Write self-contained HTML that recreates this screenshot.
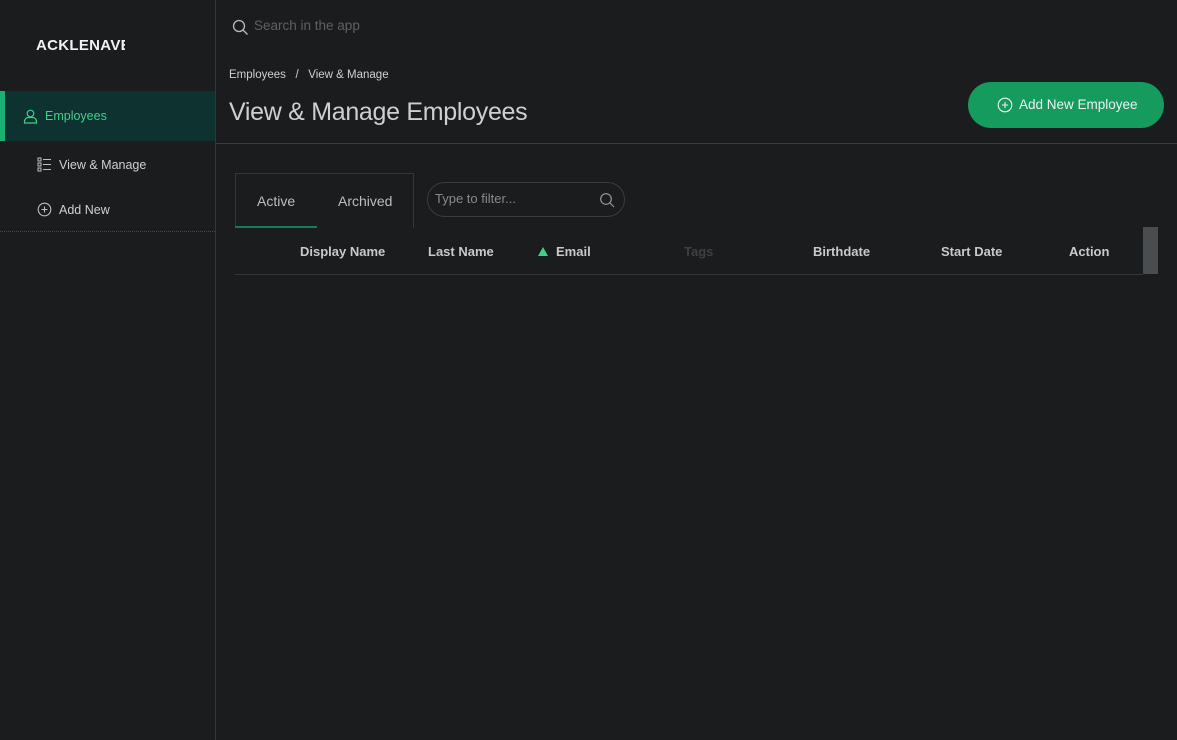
<!DOCTYPE html>
<html><head><meta charset="utf-8"><style>
*{margin:0;padding:0;box-sizing:border-box}
body{width:1177px;height:740px;background:#1b1c1e;font-family:"Liberation Sans",sans-serif;color:#c8c8c8;position:relative;overflow:hidden}
.abs{position:absolute}
.side{left:0;top:0;width:216px;height:740px;border-right:1px solid #34363a}
.logo{left:36px;top:37px;font-size:15px;font-weight:bold;color:#f2f2f2;letter-spacing:0.3px;width:89px;overflow:hidden;white-space:nowrap}
.act{left:0;top:91px;width:215px;height:50px;background:#0e3230;border-left:5px solid #1cb070}
.act span{position:absolute;left:40px;top:18px;font-size:12.5px;color:#3fd08a}
.nav{font-size:12.5px;color:#d0d0d0}
.dots{left:0;top:231px;width:215px;border-top:1px dotted #44464a}
.hdr{left:216px;top:143px;width:961px;border-top:1px solid #3a3c40}
.th{top:244px;font-size:13px;font-weight:bold;color:#c9c9c9}
</style></head><body>
<div class="abs side"></div>
<div class="abs logo">ACKLENAVE</div>
<div class="abs act"><svg style="position:absolute;left:18px;top:18px" width="15" height="15" viewBox="0 0 15 15" fill="none" stroke="#3fd08a" stroke-width="1.2"><circle cx="7.5" cy="4.5" r="3.3"/><path d="M1.5 14v-1.5c0-2 1.5-4 4-4h4c2.5 0 4 2 4 4V14z"/></svg><span>Employees</span></div>
<svg class="abs" style="left:37px;top:157px" width="15" height="15" viewBox="0 0 15 15" fill="none" stroke="#c0c0c0" stroke-width="1"><rect x="1" y="1" width="3" height="3"/><rect x="1" y="6" width="3" height="3"/><rect x="1" y="11" width="3" height="3"/><path d="M6 2.5h8M6 7.5h8M6 12.5h8"/></svg>
<div class="abs nav" style="left:59px;top:158px">View &amp; Manage</div>
<svg class="abs" style="left:37px;top:202px" width="15" height="15" viewBox="0 0 15 15" fill="none" stroke="#c0c0c0" stroke-width="1.1"><circle cx="7.5" cy="7.5" r="6.3"/><path d="M7.5 4.5v6M4.5 7.5h6"/></svg>
<div class="abs nav" style="left:59px;top:203px">Add New</div>
<div class="abs dots"></div>

<svg class="abs" style="left:232px;top:19px" width="17" height="17" viewBox="0 0 17 17" fill="none" stroke="#bbb" stroke-width="1.3"><circle cx="7" cy="7" r="5.5"/><path d="M11 11l4.5 4.5"/></svg>
<div class="abs" style="left:254px;top:18px;font-size:13.5px;color:#5e6064">Search in the app</div>
<div class="abs" style="left:229px;top:69px;font-size:11.5px;color:#d0d0d0">Employees &nbsp;&nbsp;/&nbsp;&nbsp; View &amp; Manage</div>
<div class="abs" style="left:229px;top:98px;font-size:25px;color:#cfcfcf;letter-spacing:-0.3px">View &amp; Manage Employees</div>
<div class="abs" style="left:968px;top:82px;width:196px;height:46px;border-radius:23px;background:#169b5e;color:#f0f0f0;font-size:13.5px;line-height:46px;padding-left:51px">Add New Employee</div>
<svg class="abs" style="left:997px;top:97px" width="16" height="16" viewBox="0 0 16 16" fill="none" stroke="#f0f0f0" stroke-width="1.1"><circle cx="8" cy="8" r="6.8"/><path d="M8 5v6M5 8h6"/></svg>
<div class="abs hdr"></div>

<div class="abs" style="left:235px;top:173px;width:179px;height:55px;border:1px solid #34363a;border-bottom:none"></div>
<div class="abs" style="left:235px;top:226px;width:82px;height:2px;background:#1a7a55"></div>
<div class="abs" style="left:257px;top:193px;font-size:14px;color:#bdbdbd">Active</div>
<div class="abs" style="left:338px;top:193px;font-size:14px;color:#bdbdbd">Archived</div>
<div class="abs" style="left:427px;top:182px;width:198px;height:35px;border:1px solid #3a3c40;border-radius:18px"></div>
<div class="abs" style="left:435px;top:191px;font-size:13px;color:#8a8a8a">Type to filter...</div>
<svg class="abs" style="left:599px;top:192px" width="16" height="16" viewBox="0 0 16 16" fill="none" stroke="#999" stroke-width="1.2"><circle cx="7" cy="7" r="5.3"/><path d="M11 11l4 4"/></svg>

<div class="abs th" style="left:300px">Display Name</div>
<div class="abs th" style="left:428px">Last Name</div>
<svg class="abs" style="left:538px;top:247px" width="10" height="9"><path d="M5 0L10 9H0z" fill="#3fd08a"/></svg>
<div class="abs th" style="left:556px">Email</div>
<div class="abs th" style="left:684px;color:#3e4044">Tags</div>
<div class="abs th" style="left:813px">Birthdate</div>
<div class="abs th" style="left:941px">Start Date</div>
<div class="abs th" style="left:1069px">Action</div>
<div class="abs" style="left:1143px;top:227px;width:15px;height:47px;background:#4a4d50"></div>
<div class="abs" style="left:235px;top:274px;width:908px;border-top:1px solid #34363a"></div>
</body></html>
